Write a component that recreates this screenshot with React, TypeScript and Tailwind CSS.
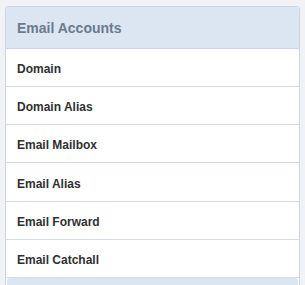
import React from "react";

const items = ["Domain", "Domain Alias", "Email Mailbox", "Email Alias", "Email Forward", "Email Catchall"];

export default function App() {
  return (
    <div
      className="w-[305px] h-[285px] bg-[#f0f2f5] pl-[5px] pt-[6px] overflow-hidden"
      style={{ fontFamily: '"Liberation Sans", Arial, sans-serif' }}
    >
      <div className="w-[295px] border border-[#c9d5e4] rounded-t-[3px] bg-white">
        <div className="h-[42px] bg-[#dce6f2] border-b border-[#c9d5e4] flex items-center pl-[11px] pt-[2px] rounded-t-[3px]">
          <span className="text-[14px] font-bold text-[#6b7a8e]">Email Accounts</span>
        </div>
        {items.map((t, i) => (
          <div
            key={t}
            className={`${i === 3 ? "h-[39px]" : "h-[38px]"} border-b border-[#d3dbe5] flex items-center pl-[11px] pt-[3px]`}
          >
            <span className="text-[12px] font-bold text-[#2f3033]">{t}</span>
          </div>
        ))}
        <div className="px-[1px]">
          <div className="h-[20px] bg-[#dce6f2] rounded-t-[3px]" />
        </div>
      </div>
    </div>
  );
}
